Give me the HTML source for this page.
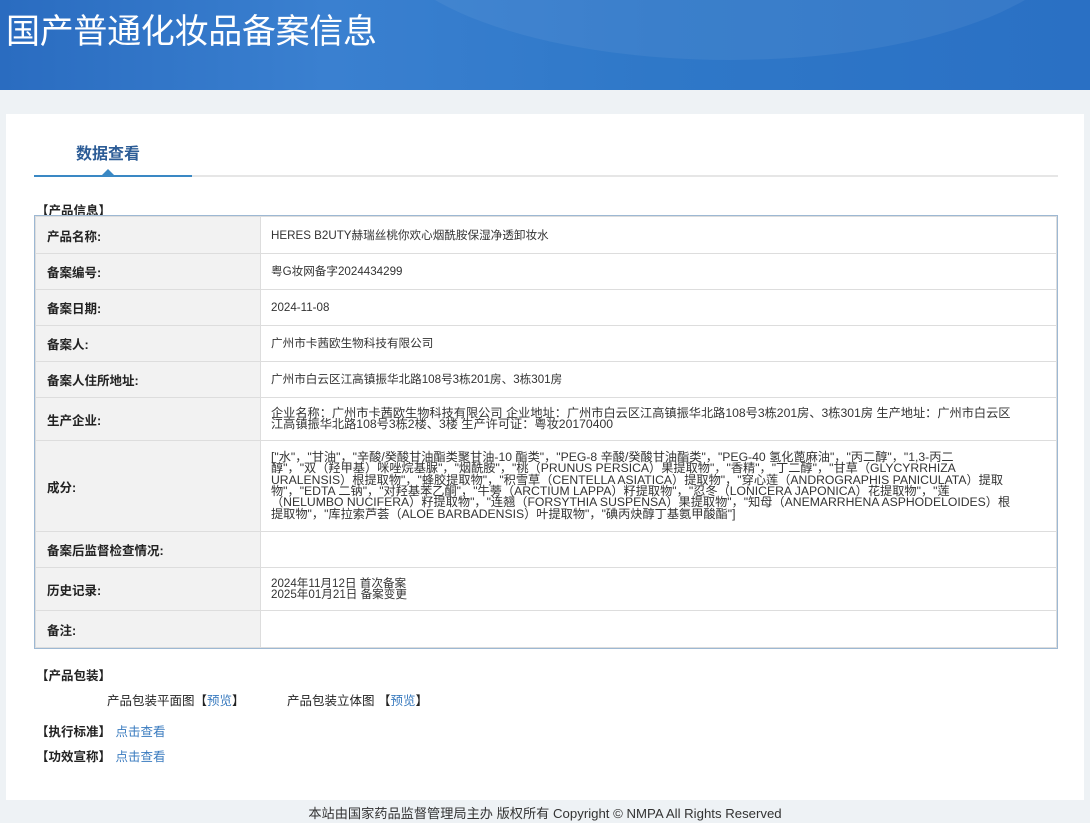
<!DOCTYPE html>
<html><head><meta charset="utf-8"><style>
*{margin:0;padding:0;box-sizing:border-box}
body{width:1090px;height:823px;background:#eef2f5;font-family:"Liberation Sans","Noto Sans CJK SC",sans-serif;color:#333;position:relative;overflow:hidden}
.hdr{position:absolute;left:0;top:0;width:1090px;height:90px;background:linear-gradient(90deg,#2a6cc0 0%,#3a80d0 30%,#2f78c8 60%,#2a70c4 100%);overflow:hidden}
.hdr .c1{position:absolute;left:380px;top:-200px;width:700px;height:260px;border-radius:50%;background:rgba(255,255,255,0.06)}
.hdr h1{position:absolute;left:6px;top:4px;font-size:34px;font-weight:normal;color:#fff;letter-spacing:-0.3px}
.card{position:absolute;left:6px;top:114px;width:1078px;height:686px;background:#fff}
.tab{position:absolute;left:76px;top:140px;font-size:16px;font-weight:bold;color:#2c5c96}
.line{position:absolute;left:34px;top:175px;width:1024px;height:2px;background:#e6e6e6}
.line2{position:absolute;left:34px;top:175px;width:158px;height:2px;background:#3a88c4}
.tri{position:absolute;left:102px;top:169px;width:0;height:0;border-left:6px solid transparent;border-right:6px solid transparent;border-bottom:6px solid #3a88c4}
.sec{position:absolute;font-size:12.5px;font-weight:bold;color:#222}
table{position:absolute;left:35px;top:216px;width:1022px;border-collapse:collapse;font-size:11.6px;outline:1px solid #9db8d3}
td{border:1px solid #ddd;vertical-align:middle}
td.l{width:225px;background:#f2f2f2;font-weight:bold;font-size:12.5px;padding-left:11px;color:#222}
td.v{padding-left:10px;line-height:11px;color:#333}
td.ing{font-size:12.2px;line-height:11.4px}
a{color:#3a7bbf;text-decoration:none}
.t{position:absolute;font-size:12.5px;color:#222}
.foot{position:absolute;top:803px;left:0;width:1090px;text-align:center;font-size:13.2px;color:#333}
</style></head><body>
<div class="hdr"><div class="c1"></div><h1>国产普通化妆品备案信息</h1></div>
<div class="card"></div>
<div class="tab">数据查看</div>
<div class="line"></div><div class="line2"></div><div class="tri"></div>
<div class="sec" style="left:36px;top:200px">【产品信息】</div>
<table>
<tr style="height:37px"><td class="l">产品名称:</td><td class="v">HERES B2UTY赫瑞丝桃你欢心烟酰胺保湿净透卸妆水</td></tr>
<tr style="height:36px"><td class="l">备案编号:</td><td class="v">粤G妆网备字2024434299</td></tr>
<tr style="height:36px"><td class="l">备案日期:</td><td class="v">2024-11-08</td></tr>
<tr style="height:36px"><td class="l">备案人:</td><td class="v">广州市卡茜欧生物科技有限公司</td></tr>
<tr style="height:36px"><td class="l">备案人住所地址:</td><td class="v">广州市白云区江高镇振华北路108号3栋201房、3栋301房</td></tr>
<tr style="height:43px"><td class="l">生产企业:</td><td class="v" style="font-size:12.2px">企业名称：广州市卡茜欧生物科技有限公司 企业地址：广州市白云区江高镇振华北路108号3栋201房、3栋301房 生产地址：广州市白云区<br>江高镇振华北路108号3栋2楼、3楼 生产许可证：粤妆20170400</td></tr>
<tr style="height:91px"><td class="l">成分:</td><td class="v ing">["水"，"甘油"，"辛酸/癸酸甘油酯类聚甘油-10 酯类"，"PEG-8 辛酸/癸酸甘油酯类"，"PEG-40 氢化蓖麻油"，"丙二醇"，"1,3-丙二<br>醇"，"双（羟甲基）咪唑烷基脲"，"烟酰胺"，"桃（PRUNUS PERSICA）果提取物"，"香精"，"丁二醇"，"甘草（GLYCYRRHIZA<br>URALENSIS）根提取物"，"蜂胶提取物"，"积雪草（CENTELLA ASIATICA）提取物"，"穿心莲（ANDROGRAPHIS PANICULATA）提取<br>物"，"EDTA 二钠"，"对羟基苯乙酮"，"牛蒡（ARCTIUM LAPPA）籽提取物"，"忍冬（LONICERA JAPONICA）花提取物"，"莲<br>（NELUMBO NUCIFERA）籽提取物"，"连翘（FORSYTHIA SUSPENSA）果提取物"，"知母（ANEMARRHENA ASPHODELOIDES）根<br>提取物"，"库拉索芦荟（ALOE BARBADENSIS）叶提取物"，"碘丙炔醇丁基氨甲酸酯"]</td></tr>
<tr style="height:36px"><td class="l">备案后监督检查情况:</td><td class="v"></td></tr>
<tr style="height:43px"><td class="l">历史记录:</td><td class="v">2024年11月12日 首次备案<br>2025年01月21日 备案变更</td></tr>
<tr style="height:37px"><td class="l">备注:</td><td class="v"></td></tr>
</table>
<div class="sec" style="left:36px;top:665px">【产品包装】</div>
<div class="t" style="left:107px;top:690px">产品包装平面图【<a>预览</a>】</div>
<div class="t" style="left:287px;top:690px">产品包装立体图 【<a>预览</a>】</div>
<div class="sec" style="left:36px;top:721px">【执行标准】 <a style="font-weight:normal;margin-left:1px">点击查看</a></div>
<div class="sec" style="left:36px;top:746px">【功效宣称】 <a style="font-weight:normal;margin-left:1px">点击查看</a></div>
<div class="foot">本站由国家药品监督管理局主办 版权所有 Copyright © NMPA All Rights Reserved</div>
</body></html>
